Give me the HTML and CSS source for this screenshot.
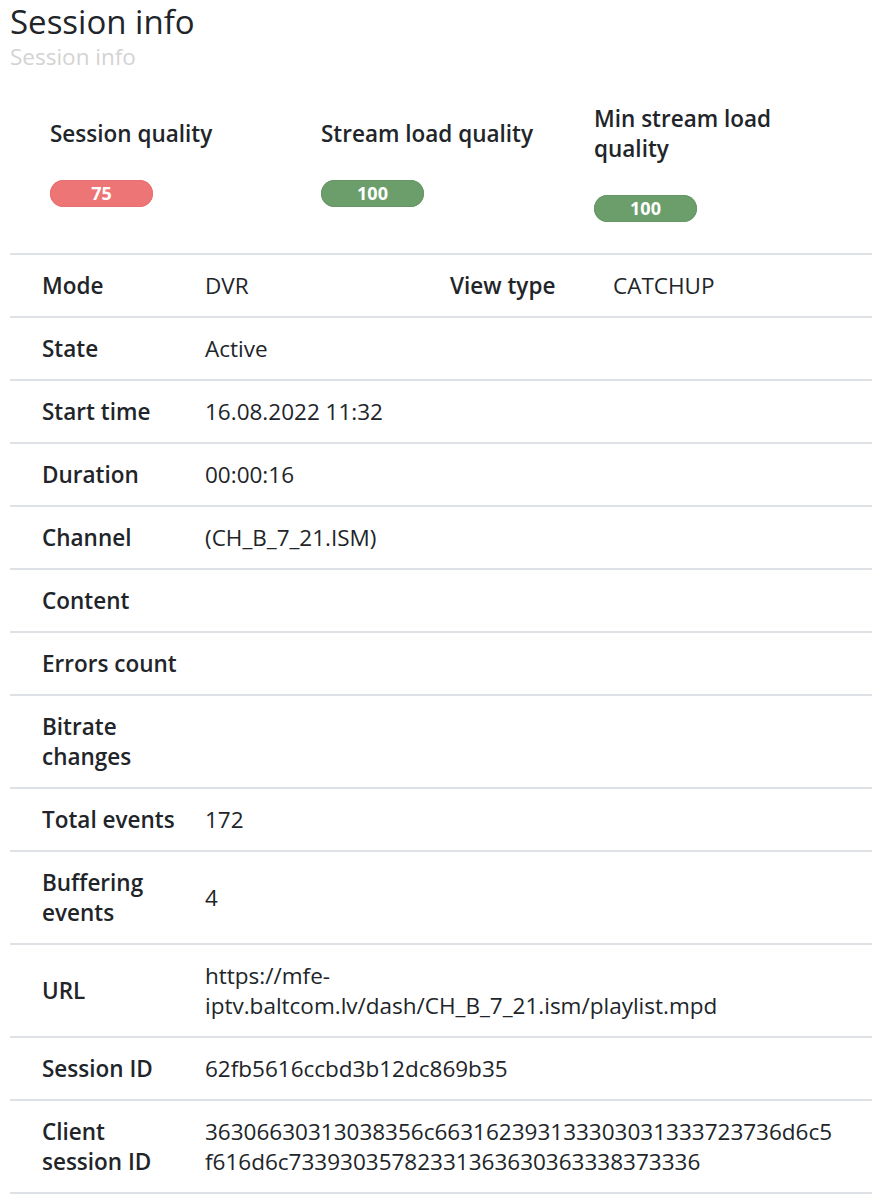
FILE: index.html
```html
<!DOCTYPE html>
<html>
<head>
<meta charset="utf-8">
<link rel="stylesheet" href="styles.css">
</head>
<body>
<div class="page">
  <h1 class="title">Session info</h1>
  <div class="subtitle">Session info</div>

  <div class="quality">
    <div class="q-col">
      <div class="q-label">Session quality</div>
      <span class="badge bad">75</span>
    </div>
    <div class="q-col">
      <div class="q-label">Stream load quality</div>
      <span class="badge good">100</span>
    </div>
    <div class="q-col">
      <div class="q-label">Min stream load quality</div>
      <span class="badge good">100</span>
    </div>
  </div>

  <div class="info">
    <div class="row">
      <div class="label">Mode</div>
      <div class="val">DVR</div>
      <div class="label">View type</div>
      <div class="val">CATCHUP</div>
    </div>
    <div class="row"><div class="label">State</div><div class="val wide">Active</div></div>
    <div class="row"><div class="label">Start time</div><div class="val wide">16.08.2022 11:32</div></div>
    <div class="row"><div class="label">Duration</div><div class="val wide">00:00:16</div></div>
    <div class="row"><div class="label">Channel</div><div class="val wide">(CH_B_7_21.ISM)</div></div>
    <div class="row"><div class="label">Content</div><div class="val wide"></div></div>
    <div class="row"><div class="label">Errors count</div><div class="val wide"></div></div>
    <div class="row"><div class="label">Bitrate changes</div><div class="val wide"></div></div>
    <div class="row"><div class="label">Total events</div><div class="val wide">172</div></div>
    <div class="row"><div class="label">Buffering events</div><div class="val wide">4</div></div>
    <div class="row"><div class="label">URL</div><div class="val wide">https://mfe-iptv.baltcom.lv/dash/CH_B_7_21.ism/playlist.mpd</div></div>
    <div class="row"><div class="label">Session ID</div><div class="val wide">62fb5616ccbd3b12dc869b35</div></div>
    <div class="row"><div class="label">Client session ID</div><div class="val wide">36306630313038356c663162393133303031333723736d6c5f616d6c73393035782331363630363338373336</div></div>
  </div>
</div>
</body>
</html>
```

FILE: styles.css
```css
* { box-sizing: border-box; }
html, body { margin: 0; padding: 0; background: #fff; }
body {
  font-family: "Open Sans", "Liberation Sans", sans-serif;
  color: #212529;
}
.page {
  padding: 0 17px 0 10px;
}
.title {
  margin: 0;
  font-size: 33px;
  font-weight: 500;
  line-height: 44px;
  color: #212529;
}
.subtitle {
  font-size: 22.5px;
  line-height: 30px;
  color: #d3d3d3;
  margin-top: -2px;
}
.quality {
  display: grid;
  grid-template-columns: 271px 273px 1fr;
  align-items: center;
  padding: 32px 0 31px 40px;
  border-bottom: 2px solid #dee2e6;
}
.q-col {
  display: flex;
  flex-direction: column;
  align-items: flex-start;
  gap: 31px;
  max-width: 232px;
}
.q-label {
  font-size: 22.5px;
  font-weight: 600;
  line-height: 30px;
}
.badge {
  display: inline-block;
  width: 103px;
  height: 27px;
  border-radius: 14px;
  color: #fff;
  font-size: 18px;
  font-weight: 700;
  line-height: 27px;
  text-align: center;
}
.badge.bad { background: #ee7575; box-shadow: inset 0 0 0 1px #e86f6f; }
.badge.good { background: #6c9e6c; box-shadow: inset 0 0 0 1px #679767; }
.info {
  display: flex;
  flex-direction: column;
}
.row {
  display: grid;
  grid-template-columns: 139px 221px 139px minmax(0, 1fr);
  column-gap: 24px;
  align-items: center;
  padding: 16px 36px 15px 32px;
  border-bottom: 2px solid #dee2e6;
  font-size: 22.5px;
  line-height: 30px;
  min-height: 63px;
}
.label {
  font-weight: 600;
}
.val {
  font-weight: 400;
  overflow-wrap: anywhere;
}
.val.wide {
  grid-column: 2 / 5;
}
```
